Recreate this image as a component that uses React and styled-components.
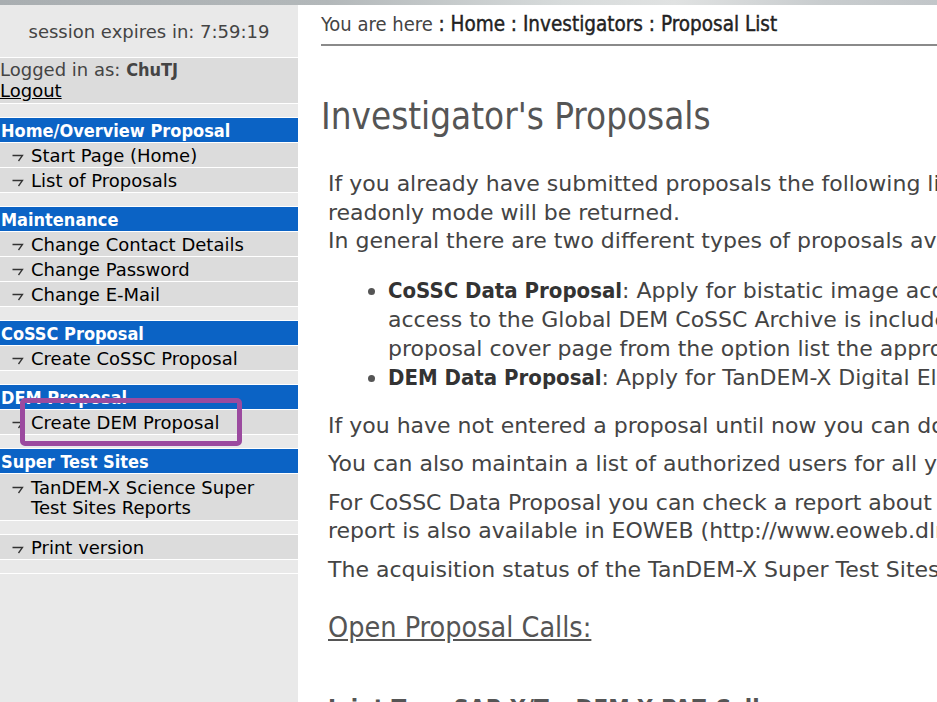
import React from 'react';
import styled, { createGlobalStyle } from 'styled-components';

const GlobalStyle = createGlobalStyle`
  html, body {
    margin: 0;
    padding: 0;
    background: #fff;
    overflow: hidden;
  }
  body {
    font-family: "DejaVu Sans", Verdana, sans-serif;
  }
`;

const Page = styled.div`
  width: 937px;
  height: 702px;
  overflow: hidden;
  display: flex;
  flex-direction: column;
`;

const TopStrip = styled.div`
  height: 5px;
  flex: none;
  background: linear-gradient(90deg, #a9aeb1 0%, #b3b8ba 35%, #d7dbdb 60%, #e0e2e2 72%, #c8ccce 88%, #c2c6c9 100%);
`;

const Body = styled.div`
  flex: 1;
  display: flex;
  min-height: 0;
`;

const Sidebar = styled.div`
  position: relative;
  width: 298px;
  flex: none;
  background: #e9e9e9;
  font-family: "DejaVu Sans", Verdana, sans-serif;
`;

const Session = styled.div`
  height: 52px;
  display: flex;
  align-items: center;
  justify-content: center;
  color: #444;
  font-size: 18px;
  border-bottom: 1px solid #fff;
`;

const LoginBox = styled.div`
  background: #dcdcdc;
  color: #444;
  font-size: 18px;
  line-height: 21px;
  padding: 1px 0 2px 0;
  border-bottom: 1px solid #fff;
  b {
    color: #444;
    font-family: "DejaVu Sans Condensed", "DejaVu Sans", sans-serif;
    font-stretch: condensed;
  }
  a { color: #000; text-decoration: underline; }
`;

const Spacer = styled.div`
  height: 13px;
  border-bottom: 1px solid #fff;
`;

const Header = styled.div`
  background: #0b63c5;
  color: #fff;
  font-family: "DejaVu Sans Condensed", "DejaVu Sans", sans-serif;
  font-stretch: condensed;
  font-weight: bold;
  font-size: 18px;
  height: 24px;
  line-height: 25px;
  padding-left: 1px;
  white-space: nowrap;
  border-bottom: 1px solid #fff;
`;

const Item = styled.div`
  display: flex;
  align-items: flex-start;
  background: #dcdcdc;
  color: #000;
  font-size: 18px;
  line-height: 20px;
  padding: ${p => (p.$multi ? '4px 0 2px' : '3px 0 1px')};
  border-bottom: 1px solid #fff;
`;

const Arrow = styled.svg`
  flex: none;
  width: 12px;
  height: 8px;
  margin: 8px 7px 0 12px;
`;

const Overlay = styled.div`
  position: absolute;
  left: 20px;
  top: 393px;
  width: 212px;
  height: 38px;
  border: 5px solid #9b4a9f;
  border-radius: 5px;
  pointer-events: none;
`;

const Main = styled.div`
  flex: 1;
  min-width: 0;
  overflow: hidden;
  color: #444;
`;

const Breadcrumb = styled.div`
  margin: 7px 0 0 23px;
  padding-bottom: 8px;
  border-bottom: 2px solid #8a8a8a;
  font-family: "DejaVu Sans Condensed", "DejaVu Sans", sans-serif;
  font-stretch: condensed;
  font-size: 20px;
  line-height: 24px;
  white-space: nowrap;
  span { color: #444; }
  b {
    font-weight: normal;
    font-size: 20.5px;
    color: #222;
    -webkit-text-stroke: 0.4px #222;
  }
`;

const Title = styled.h1`
  margin: 50px 0 0 23px;
  font-family: "DejaVu Sans Condensed", "DejaVu Sans", sans-serif;
  font-stretch: condensed;
  font-weight: normal;
  font-size: 36.5px;
  line-height: 42px;
  color: #555;
  white-space: nowrap;
`;

const Text = styled.p`
  margin: ${p => p.$top || '10px'} 0 0 30px;
  font-size: 22px;
  line-height: 28.5px;
  white-space: nowrap;
  color: #444;
`;

const List = styled.ul`
  margin: 20px 0 20px 0;
  padding-left: 90px;
  font-size: 22px;
  line-height: 29px;
  white-space: nowrap;
  color: #444;
  li::marker { color: #555; }
  b {
    font-family: "DejaVu Sans Condensed", "DejaVu Sans", sans-serif;
    font-stretch: condensed;
    color: #333;
  }
`;

const SubTitle = styled.h2`
  margin: 28px 0 0 30px;
  font-family: "DejaVu Sans Condensed", "DejaVu Sans", sans-serif;
  font-stretch: condensed;
  font-weight: normal;
  font-size: 28.5px;
  line-height: 32px;
  color: #555;
  text-decoration: underline;
  white-space: nowrap;
`;

const CallTitle = styled.h3`
  margin: 51px 0 0 30px;
  font-family: "DejaVu Sans Condensed", "DejaVu Sans", sans-serif;
  font-stretch: condensed;
  font-size: 24px;
  color: #555;
  white-space: nowrap;
`;

const ArrowIcon = () => (
  <Arrow viewBox="0 0 12 8">
    <path d="M0.5 1.5 H10.5 L6.5 7" fill="none" stroke="#333" strokeWidth="1.3" />
  </Arrow>
);

const NavItem = ({ children, multi }) => (
  <Item $multi={multi}>
    <ArrowIcon />
    <div>{children}</div>
  </Item>
);

const sections = [
  { title: 'Home/Overview Proposal', items: ['Start Page (Home)', 'List of Proposals'] },
  { title: 'Maintenance', items: ['Change Contact Details', 'Change Password', 'Change E-Mail'] },
  { title: 'CoSSC Proposal', items: ['Create CoSSC Proposal'] },
  { title: 'DEM Proposal', items: ['Create DEM Proposal'] },
];

export default function App() {
  return (
    <Page>
      <GlobalStyle />
      <TopStrip />
      <Body>
        <Sidebar>
          <Session>session expires in: 7:59:19</Session>
          <LoginBox>
            Logged in as: <b>ChuTJ</b>
            <br />
            <a>Logout</a>
          </LoginBox>
          <Spacer />
          {sections.map(s => (
            <React.Fragment key={s.title}>
              <Header>{s.title}</Header>
              {s.items.map(it => (
                <NavItem key={it}>{it}</NavItem>
              ))}
              <Spacer />
            </React.Fragment>
          ))}
          <Header>Super Test Sites</Header>
          <NavItem multi>
            TanDEM-X Science Super
            <br />
            Test Sites Reports
          </NavItem>
          <Spacer />
          <NavItem>Print version</NavItem>
          <Spacer />
          <Overlay />
        </Sidebar>
        <Main>
          <Breadcrumb>
            <span>You are here</span> <b>: Home : Investigators : Proposal List</b>
          </Breadcrumb>
          <Title>Investigator's Proposals</Title>
          <Text $top="32px">
            If you already have submitted proposals the following list shows them. By selecting a proposal the proposal in
            <br />
            readonly mode will be returned.
            <br />
            In general there are two different types of proposals available:
          </Text>
          <List>
            <li>
              <b>CoSSC Data Proposal</b>: Apply for bistatic image acquisitions and CoSSC data.
              <br />
              access to the Global DEM CoSSC Archive is included. Please select in the
              <br />
              proposal cover page from the option list the appropriate type.
            </li>
            <li>
              <b>DEM Data Proposal</b>: Apply for TanDEM-X Digital Elevation Model data.
            </li>
          </List>
          <Text>If you have not entered a proposal until now you can do this via the menu on the left.</Text>
          <Text>You can also maintain a list of authorized users for all your proposals.</Text>
          <Text>
            For CoSSC Data Proposal you can check a report about the acquisition status. This
            <br />
            report is also available in EOWEB (http://www.eoweb.dlr.de).
          </Text>
          <Text>The acquisition status of the TanDEM-X Super Test Sites is available as report.</Text>
          <SubTitle>Open Proposal Calls:</SubTitle>
          <CallTitle>Joint TerraSAR-X/TanDEM-X PAZ Call</CallTitle>
        </Main>
      </Body>
    </Page>
  );
}
